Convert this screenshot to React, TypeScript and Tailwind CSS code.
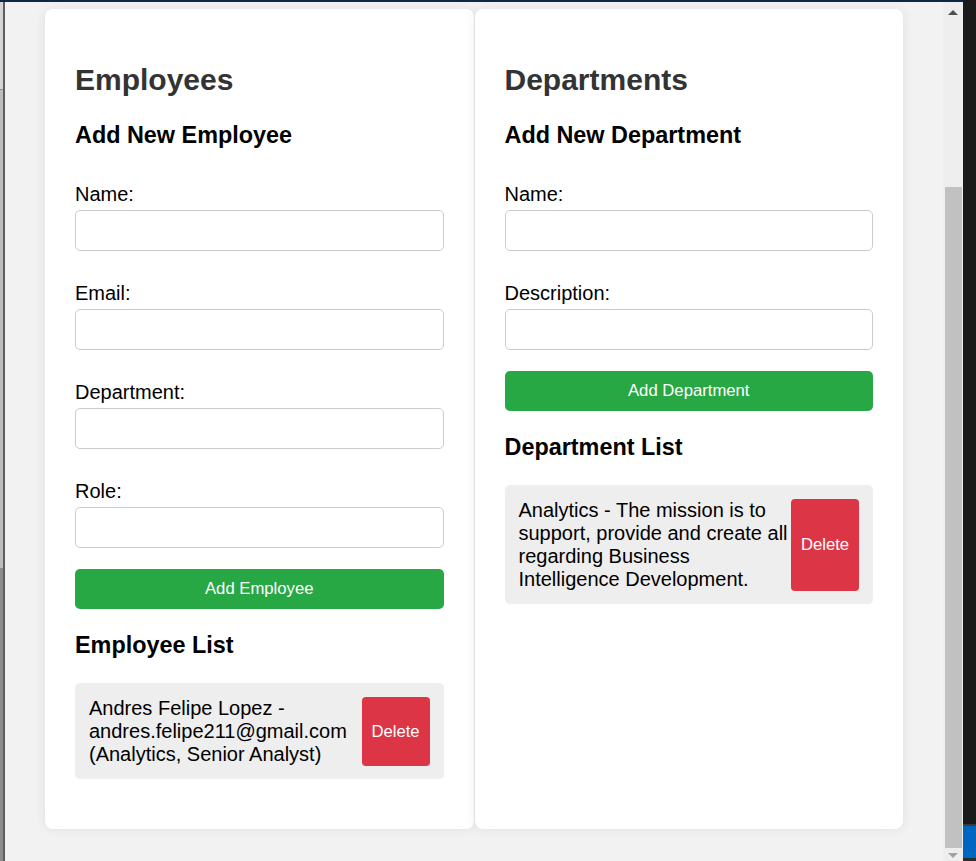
import { useState } from "react";

type Employee = { id: number; name: string; email: string; department: string; role: string };
type Department = { id: number; name: string; description: string };

function Field({ label }: { label: string }) {
  return (
    <div className="flex flex-col">
      <label className="text-[20px] leading-[23px] text-black mb-[4px]">{label}</label>
      <input type="text" className="h-[41px] w-full rounded-[5px] border border-[#cccccc] bg-white px-[12px] text-[20px] outline-none" />
    </div>
  );
}

function ListItem({ text }: { text: string }) {
  return (
    <div className="flex items-stretch rounded-[5px] bg-[#eeeeee] pl-[14px] pr-[14px] pt-[14px] pb-[13px]">
      <div className="flex-1 text-[20px] leading-[23px] text-black">{text}</div>
      <button className="w-[68px] shrink-0 rounded-[4px] bg-[#dc3545] text-[16.7px] text-white">Delete</button>
    </div>
  );
}

export default function App() {
  const [employees] = useState<Employee[]>([
    { id: 1, name: "Andres Felipe Lopez", email: "andres.felipe211@gmail.com", department: "Analytics", role: "Senior Analyst" },
  ]);
  const [departments] = useState<Department[]>([
    { id: 1, name: "Analytics", description: "The mission is to support, provide and create all regarding Business Intelligence Development." },
  ]);

  return (
    <div className="flex h-[861px] w-[976px] overflow-hidden bg-[#f2f2f2] font-['Liberation_Sans',Arial,sans-serif]">
      <div className="flex flex-1 flex-col">
        {/* window top edge */}
        <div className="h-[2px] bg-[#0f2746]" />
        <div className="flex min-h-0 flex-1">
          {/* left window edge */}
          <div className="flex w-[5px]">
            <div className="flex w-[3px] flex-col">
              <div className="h-[87px] bg-[#d4d4d4]" />
              <div className="h-[1px] bg-[#8e8e8e]" />
              <div className="h-[478px] bg-[#bcbcbc]" />
              <div className="flex-1 bg-[#8c8c8c]" />
            </div>
            <div className="w-[2px] bg-[#5e5e5e]" />
          </div>

          {/* main content */}
          <div className="flex-1 px-[40px] pt-[7px]">
            <div className="grid grid-cols-2 gap-[1px]">
              {/* Employees */}
              <div className="rounded-[8px] bg-white px-[30px] pt-[30px] pb-[50px] shadow-[0_0_12px_rgba(0,0,0,0.08)]">
                <h2 className="mt-[24px] text-[30px] font-bold leading-[34px] text-[#333333]">Employees</h2>
                <h3 className="mt-[25px] text-[23.4px] font-bold leading-[27px] text-black">Add New Employee</h3>
                <div className="mt-[34px] flex flex-col gap-[31px]">
                  <Field label="Name:" />
                  <Field label="Email:" />
                  <Field label="Department:" />
                  <Field label="Role:" />
                </div>
                <button className="mt-[21px] h-[40px] w-full rounded-[5px] bg-[#28a745] text-[16.7px] text-white">Add Employee</button>
                <h3 className="mt-[23px] text-[23.4px] font-bold leading-[27px] text-black">Employee List</h3>
                <div className="mt-[24px] flex flex-col gap-[10px]">
                  {employees.map((e) => (
                    <ListItem key={e.id} text={`${e.name} - ${e.email} (${e.department}, ${e.role})`} />
                  ))}
                </div>
              </div>

              {/* Departments */}
              <div className="rounded-[8px] bg-white px-[30px] pt-[30px] pb-[50px] shadow-[0_0_12px_rgba(0,0,0,0.08)]">
                <h2 className="mt-[24px] text-[30px] font-bold leading-[34px] text-[#333333]">Departments</h2>
                <h3 className="mt-[25px] text-[23.4px] font-bold leading-[27px] text-black">Add New Department</h3>
                <div className="mt-[34px] flex flex-col gap-[31px]">
                  <Field label="Name:" />
                  <Field label="Description:" />
                </div>
                <button className="mt-[21px] h-[40px] w-full rounded-[5px] bg-[#28a745] text-[16.7px] text-white">Add Department</button>
                <h3 className="mt-[23px] text-[23.4px] font-bold leading-[27px] text-black">Department List</h3>
                <div className="mt-[24px] flex flex-col gap-[10px]">
                  {departments.map((d) => (
                    <ListItem key={d.id} text={`${d.name} - ${d.description}`} />
                  ))}
                </div>
              </div>
            </div>
          </div>

          {/* scrollbar */}
          <div className="flex w-[20px] flex-col bg-[#eeeeee]">
            <div className="flex h-[17px] items-center justify-center pt-[4px]">
              <svg width="10" height="6" viewBox="0 0 10 6"><path d="M5 0 L10 5 L0 5 Z" fill="#505050" /></svg>
            </div>
            <div className="h-[168px]" />
            <div className="ml-[2px] h-[661px] w-[17px] bg-[#c1c1c1]" />
            <div className="flex flex-1 items-end justify-center pb-[2px]">
              <svg width="10" height="6" viewBox="0 0 10 6"><path d="M0 0 L10 0 L5 5 Z" fill="#a3a3a3" /></svg>
            </div>
          </div>
        </div>
      </div>

      {/* neighbouring window edge */}
      <div className="flex w-[13px] flex-col bg-[#1a1a1a]">
        <div className="h-[824px]" />
        <div className="h-[2px] bg-[#3a3a3a]" />
        <div className="h-[32px] bg-[#0067c0]" />
        <div className="flex-1 bg-[#2b2b2b]" />
      </div>
    </div>
  );
}
